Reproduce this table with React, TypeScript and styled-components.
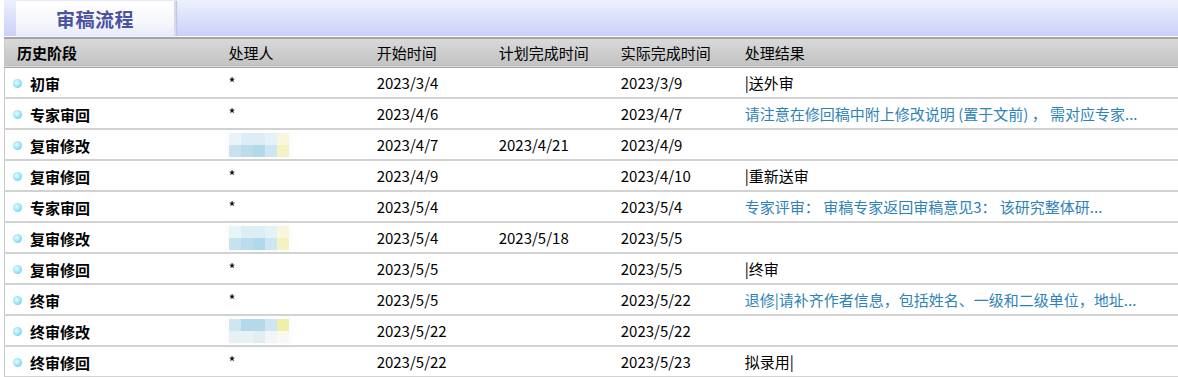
import styled, { createGlobalStyle } from "styled-components";

const GlobalStyle = createGlobalStyle`
  body {
    margin: 0;
    padding: 0 0 0 4px;
    background: #ffffff;
    font-family: "Noto Sans CJK SC", "Noto Sans", sans-serif;
    font-size: 15px;
    color: #000;
  }
`;

const Wrap = styled.div`
  width: 1174px;
  overflow: hidden;
`;

const TitleBar = styled.div`
  height: 36px;
  background: linear-gradient(#eef0fd, #c9d1f9);
  border-bottom: 1px solid #ffffff;
  display: flex;
  align-items: flex-end;
  padding-left: 12px;
`;

const Tab = styled.div`
  width: 160px;
  height: 35px;
  box-sizing: border-box;
  background: linear-gradient(#ffffff, #f4f5fc 70%, #e6e9f8);
  border-right: 2px solid #d6daf0;
  box-shadow: 1px 0 1px #c0c6e6;
  display: flex;
  align-items: center;
  justify-content: center;
  font-size: 19px;
  font-weight: 700;
  color: #4a52a2;
  letter-spacing: 0.5px;
`;

const Table = styled.table`
  width: 100%;
  border-collapse: collapse;
  table-layout: fixed;
  border-left: 1px solid #c8c8c8;
  border-top: 2px solid #a4a4a4;
`;

const HeadRow = styled.tr`
  height: 29px;
  background: linear-gradient(#dadada, #c2c2c2);
  border-bottom: 1px solid #a8a8a8;
`;

const Th = styled.th<{ $bold?: boolean }>`
  text-align: left;
  font-weight: ${(p) => (p.$bold ? 700 : 400)};
  padding: 0 0 0 12px;
  white-space: nowrap;
`;

const Row = styled.tr`
  height: 31px;
  border-bottom: 2px solid #d2d2d2;
`;

const Td = styled.td<{ $first?: boolean }>`
  padding: 0 0 0 ${(p) => (p.$first ? 8 : 12)}px;
  white-space: nowrap;
  overflow: hidden;
`;

const Stage = styled.span`
  display: inline-flex;
  align-items: center;
  gap: 8px;
  font-weight: 700;
`;

const Dot = styled.span`
  width: 9px;
  height: 9px;
  border-radius: 50%;
  background: radial-gradient(circle at 40% 40%, #eafcff 0%, #9ae4fb 50%, #48bdee 100%);
`;

const Result = styled.span<{ $link?: boolean }>`
  color: ${(p) => (p.$link ? "#2d82b8" : "#000")};
`;

const Blur = styled.div`
  display: grid;
  grid-template-columns: repeat(5, 12px);
  grid-template-rows: repeat(2, 12px);
  width: 60px;
  box-shadow: 0 0 6px 4px #fcfcfc;
`;

const Cell = styled.div<{ $c: string }>`
  background: ${(p) => p.$c};
`;

const blurA = ["#e8f4f8", "#dcedf5", "#dcedf5", "#e4f1f6", "#f8f7dc", "#c6e2ef", "#bcdcec", "#b2d9eb", "#cde6f1", "#f3f2c2"];
const blurB = ["#cde6f2", "#b5d9eb", "#b5d9eb", "#cde6f2", "#f0efaa", "#e6f1f6", "#e8f2f6", "#e2eef4", "#f2f5f7", "#f8f8f4"];

type Rec = {
  stage: string;
  who: string;
  start: string;
  plan: string;
  done: string;
  result: string;
  link?: boolean;
};

const rows: Rec[] = [
  { stage: "初审", who: "*", start: "2023/3/4", plan: "", done: "2023/3/9", result: "|送外审" },
  { stage: "专家审回", who: "*", start: "2023/4/6", plan: "", done: "2023/4/7", result: "请注意在修回稿中附上修改说明 (置于文前) ， 需对应专家...", link: true },
  { stage: "复审修改", who: "blurA", start: "2023/4/7", plan: "2023/4/21", done: "2023/4/9", result: "" },
  { stage: "复审修回", who: "*", start: "2023/4/9", plan: "", done: "2023/4/10", result: "|重新送审" },
  { stage: "专家审回", who: "*", start: "2023/5/4", plan: "", done: "2023/5/4", result: "专家评审： 审稿专家返回审稿意见3： 该研究整体研...", link: true },
  { stage: "复审修改", who: "blurA", start: "2023/5/4", plan: "2023/5/18", done: "2023/5/5", result: "" },
  { stage: "复审修回", who: "*", start: "2023/5/5", plan: "", done: "2023/5/5", result: "|终审" },
  { stage: "终审", who: "*", start: "2023/5/5", plan: "", done: "2023/5/22", result: "退修|请补齐作者信息，包括姓名、一级和二级单位，地址...", link: true },
  { stage: "终审修改", who: "blurB", start: "2023/5/22", plan: "", done: "2023/5/22", result: "" },
  { stage: "终审修回", who: "*", start: "2023/5/22", plan: "", done: "2023/5/23", result: "拟录用|" },
];

function Who({ v }: { v: string }) {
  if (v === "blurA" || v === "blurB") {
    const cs = v === "blurA" ? blurA : blurB;
    return (
      <Blur>
        {cs.map((c, i) => (
          <Cell key={i} $c={c} />
        ))}
      </Blur>
    );
  }
  return <>{v}</>;
}

export default function App() {
  return (
    <Wrap>
      <GlobalStyle />
      <TitleBar>
        <Tab>审稿流程</Tab>
      </TitleBar>
      <Table>
        <colgroup>
          <col style={{ width: 212 }} />
          <col style={{ width: 148 }} />
          <col style={{ width: 122 }} />
          <col style={{ width: 122 }} />
          <col style={{ width: 124 }} />
          <col style={{ width: 445 }} />
        </colgroup>
        <thead>
          <HeadRow>
            <Th $bold>历史阶段</Th>
            <Th>处理人</Th>
            <Th>开始时间</Th>
            <Th>计划完成时间</Th>
            <Th>实际完成时间</Th>
            <Th>处理结果</Th>
          </HeadRow>
        </thead>
        <tbody>
          {rows.map((r, i) => (
            <Row key={i}>
              <Td $first>
                <Stage>
                  <Dot />
                  {r.stage}
                </Stage>
              </Td>
              <Td>
                <Who v={r.who} />
              </Td>
              <Td>{r.start}</Td>
              <Td>{r.plan}</Td>
              <Td>{r.done}</Td>
              <Td>
                <Result $link={r.link}>{r.result}</Result>
              </Td>
            </Row>
          ))}
        </tbody>
      </Table>
    </Wrap>
  );
}
